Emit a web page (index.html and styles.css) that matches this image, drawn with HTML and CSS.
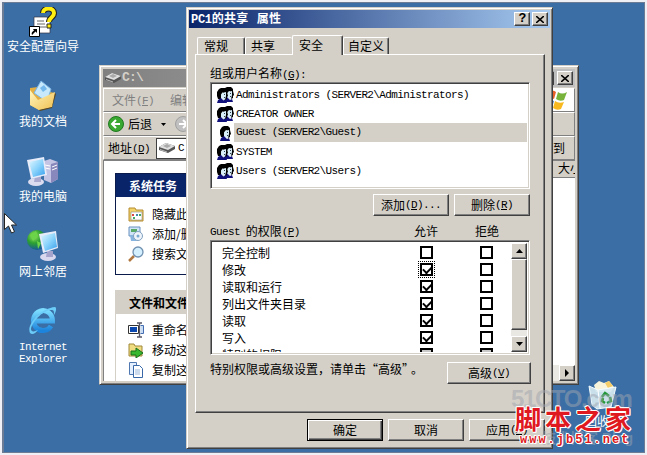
FILE: index.html
```html
<!DOCTYPE html>
<html lang="zh-CN">

<head>
    <meta charset="UTF-8">
    <meta name="viewport" content="width=device-width, initial-scale=1.0">
    <title>PC1的共享 属性</title>
    <link rel="stylesheet" href="styles.css">
</head>

<body>
    <!-- shared icons -->
    <svg width="0" height="0" class="defs">
        <defs>
            <linearGradient id="screen" x1="0" y1="0" x2="1" y2="1">
                <stop offset="0" stop-color="#e4f8ff" />
                <stop offset=".5" stop-color="#8cd4fc" />
                <stop offset="1" stop-color="#38a0ec" />
            </linearGradient>
            <linearGradient id="ie" x1="0" y1="0" x2="0" y2="1">
                <stop offset="0" stop-color="#7cdcff" />
                <stop offset="1" stop-color="#1c84dc" />
            </linearGradient>
            <linearGradient id="paper" x1="0" y1="0" x2="1" y2="1">
                <stop offset="0" stop-color="#fff6c0" />
                <stop offset="1" stop-color="#f0c050" />
            </linearGradient>
            <radialGradient id="globe" cx=".35" cy=".3" r=".8">
                <stop offset="0" stop-color="#9ce860" />
                <stop offset=".45" stop-color="#2ca030" />
                <stop offset="1" stop-color="#1048b0" />
            </radialGradient>
            <symbol id="head" viewBox="0 0 11 15">
                <path d="M2 1l2-1h4l2 2v3H8L6 4 4 7v4H1L0 8V4z" fill="#000" />
                <path d="M5 5l4-1 1 4-1 3-2 1-3-2V7z" fill="#d8eef8" />
                <path d="M9 4h1l1 4-1 1v2l-2 1 1-4z" fill="#000" />
                <path d="M1 12l3-2 3 3 2-1 1 3H0z" fill="#10107c" />
                <path d="M7 6h1v1H7zM7 9h1v1H7z" fill="#304050" />
            </symbol>
            <symbol id="user" viewBox="0 0 17 16">
                <use href="#head" x="3" y="1" width="11" height="15" />
            </symbol>
            <symbol id="group" viewBox="0 0 17 16">
                <use href="#head" x="6" y="0" width="11" height="15" />
                <use href="#head" x="0" y="1" width="11" height="15" />
            </symbol>
            <symbol id="drive" viewBox="0 0 16 12">
                <path d="M0 5l7-4 9 3v3l-7 4-9-3z" fill="#555" />
                <path d="M0 5l7-4 9 3-7 4z" fill="#e0e0e0" />
                <path d="M4 4l4-2 4 2-4 2z" fill="#aaa" />
                <path d="M1 7l7 2.500v1L1 8z" fill="#bbb" />
            </symbol>
        </defs>
    </svg>

    <div class="desktop">
        <div class="shortcut s1">
            <svg width="28" height="30" viewBox="0 0 28 30">
                <path d="M5 10h13l3 4v12H5z" fill="#fff" stroke="#334" stroke-width=".7" />
                <path d="M8 14h7M8 17h8M8 20h9" stroke="#666" />
                <path d="M14 6c0-6 11-6 11 0 0 5-5 4-5 9" fill="none" stroke="#222" stroke-width="6" />
                <path d="M14 6c0-6 11-6 11 0 0 5-5 4-5 9" fill="none" stroke="#ffee10" stroke-width="4" />
                <path d="M18 17h4v4h-4z" fill="#ffee10" stroke="#222" />
                <path d="M.5 19.500h10v10H.5z" fill="#fff" stroke="#000" />
                <path d="M4 22h4v4l-1.500-1.500L3 28c-1-2 0-3 2-4.500z" fill="#000" />
            </svg>
            <span>安全配置向导</span>
        </div>
        <div class="shortcut s2">
            <svg width="30" height="32" viewBox="0 0 30 32">
                <path d="M2 8l8-1 2 3 15 3-3 14-13 3-9-5z" fill="#e4ae40" />
                <path d="M13 1l10 8-4 13-13-9z" fill="#c8e8fc" stroke="#78b4e4" />
                <path d="M12 8l4-3 3 4-4 3z" fill="#74b8ec" />
                <path d="M2 10l8 10 17-8-3 15-13 3-9-5z" fill="url(#paper)" />
                <path d="M27 13l1 1-4 14-12 3-1-1 13-3z" fill="#5c4820" />
            </svg>
            <span>我的文档</span>
        </div>
        <div class="shortcut s3">
            <svg width="32" height="32" viewBox="0 0 32 32">
                <path d="M17 5l6-2 8 3v17l-7 4-7-3z" fill="#c4c4e4" />
                <path d="M24 8l7-2v17l-7 4z" fill="#8888bc" />
                <path d="M18 9l5 1M18 12l5 1M25 11l5-2M25 14l5-2" stroke="#fff" />
                <ellipse cx="9" cy="26" rx="8" ry="4" fill="#dcdcf0" />
                <path d="M8 20h6v6H7z" fill="#aaaad0" />
                <path d="M0 4l17-3 3 18-16 4z" fill="#e8ecfa" />
                <path d="M2 6l14-3 2 15-12 3z" fill="url(#screen)" />
            </svg>
            <span>我的电脑</span>
        </div>
        <div class="shortcut s4">
            <svg width="32" height="34" viewBox="0 0 32 34">
                <circle cx="10" cy="11" r="10" fill="url(#globe)" />
                <path d="M3 6l6-4 2 5-5 5zM10 12l4 2-3 6z" fill="#6cd448" />
                <ellipse cx="21" cy="28" rx="8" ry="4" fill="#d8d8ee" />
                <path d="M20 22h6v6h-7z" fill="#a4a4cc" />
                <path d="M12 5l17-3 2 17-15 5z" fill="#e8ecfa" />
                <path d="M14 7l14-3 2 14-12 4z" fill="url(#screen)" />
            </svg>
            <span>网上邻居</span>
        </div>
        <div class="shortcut s5">
            <svg width="32" height="32" viewBox="0 0 32 32">
                <path d="M24 21a9.500 10 0 1 1 1.500-5H9" fill="none" stroke="url(#ie)" stroke-width="5" />
                <path d="M3 28C-1 20 14 3 28 2c2 1 1 5-1 8 0-4 0-5-3-5C15 6 5 17 4 24c0 3 3 3 7 1-3 4-6 5-8 3z" fill="#6cccf8" />
            </svg>
            <span class="en">Internet<br>Explorer</span>
        </div>
        <div class="shortcut s6">
            <svg width="30" height="30" viewBox="0 0 30 30">
                <path d="M6 5l5-4 5 2 5-2 5 6-3 5H8z" fill="#f8f4dc" />
                <path d="M17 3l4-2 4 5-5 2z" fill="#f4cc68" />
                <path d="M1 6l9 4 18-3-5 20-14 2-5-4z" fill="#d4e8f0" fill-opacity=".93" stroke="#f4fcff" />
                <path d="M10 10l2 18" stroke="#fff" />
                <path d="M14 17l3-4 4 3M22 17l1 4-4 2M17 23l-3-2 1-3" fill="none" stroke="#209838" stroke-width="2.500" />
            </svg>
            <span>回收站</span>
        </div>

        <!-- explorer window behind -->
        <div class="explorer">
            <div class="bar gray-title">
                <svg width="16" height="12"><use href="#drive" /></svg>
                <b class="en">C:\</b>
                <i class="btn sys"></i>
                <i class="btn sys"><svg width="8" height="7" viewBox="0 0 8 7"><path d="M0 0l8 7M8 0L0 7" stroke="#000" stroke-width="1.600" /></svg></i>
            </div>
            <div class="strip menu">
                <span>文件<span class="en">(<u>F</u>)</span></span>
                <span>编辑<span class="en">(<u>E</u>)</span></span>
                <div class="flag">
                    <svg width="24" height="22" viewBox="0 0 24 22">
                        <path d="M3 3q5-3 8 0l-2 7q-4-2-8 0z" fill="#e86028" />
                        <path d="M13 3q4 3 9 0l-3 8q-4 2-8-1z" fill="#78b43c" />
                        <path d="M1 12q4-2 8 0l-2 7q-4-2-8 0z" fill="#4c88d8" />
                        <path d="M10 12q4 3 9 1l-3 7q-4 2-8-1z" fill="#f8b820" />
                    </svg>
                </div>
            </div>
            <div class="strip tools">
                <svg width="16" height="16" viewBox="0 0 16 16"><circle cx="8" cy="8" r="7.500" fill="#38a830" stroke="#207820" /><path d="M12 8H5M8 4L4 8l4 4" fill="none" stroke="#fff" stroke-width="2" /></svg>
                <span>后退</span>
                <svg class="drop" width="5" height="3"><path d="M0 0h5L2.500 3z" /></svg>
                <svg width="16" height="16" viewBox="0 0 16 16"><circle cx="8" cy="8" r="7.500" fill="#c0c0c0" stroke="#a0a0a0" /><path d="M4 8h7M8 4l4 4-4 4" fill="none" stroke="#fff" stroke-width="2" /></svg>
            </div>
            <div class="strip address">
                <span>地址<span class="en">(<u>D</u>)</span></span>
                <div class="path">
                    <svg width="16" height="12"><use href="#drive" /></svg>
                    <span class="en">C:\</span>
                </div>
                <span>转到</span>
            </div>
            <div class="view">
                <div class="tasks">
                    <div class="box blue">
                        <h3>系统任务</h3>
                        <p>
                            <svg width="16" height="16" viewBox="0 0 16 16"><path d="M1 2h6l1 2h7v11H1z" fill="#f4d468" stroke="#b48c30" /><path d="M3 6h11v8H3z" fill="#fff" stroke="#888" stroke-width=".6" /><path d="M4 8h2v2H4z" fill="#d44" /><path d="M8 8h2v2H8z" fill="#48a" /><path d="M11 8h2v2h-2zM5 11h2v2H5z" fill="#4a6" /></svg>
                            隐藏此驱动器
                        </p>
                        <p>
                            <svg width="16" height="16" viewBox="0 0 16 16"><path d="M1 1h11v9H1z" fill="#d0e4f8" stroke="#6890c0" /><path d="M3 3h6v3H3z" fill="#58a868" /><path d="M2 9h8v6H3z" fill="#88b4e0" /><circle cx="10" cy="10" r="4.500" fill="#eef4fa" stroke="#80a0c0" /><circle cx="10" cy="10" r="1.500" fill="#78a8d0" /></svg>
                            添加/删除程序
                        </p>
                        <p>
                            <svg width="16" height="16" viewBox="0 0 16 16"><path d="M1 15l5-5" stroke="#b07840" stroke-width="2.500" /><circle cx="10" cy="6" r="5" fill="#d4f0ff" stroke="#7090b0" stroke-width="1.300" /></svg>
                            搜索文件
                        </p>
                    </div>
                    <div class="box">
                        <h3>文件和文件夹任务</h3>
                        <p>
                            <svg width="16" height="16" viewBox="0 0 16 16"><path d="M.5 3.500h10v8H.5z" fill="#fff" stroke="#333" /><path d="M2 5h7v5H2z" fill="#0a48b0" /><path d="M9 1h5M9 15h5M11.500 1v14" stroke="#556" stroke-width="1.300" /><path d="M12.500 3.500h3v8h-3" fill="#c8dcf4" stroke="#446cb0" /></svg>
                            重命名这个文件夹
                        </p>
                        <p>
                            <svg width="16" height="16" viewBox="0 0 16 16"><path d="M1 2h5l1 2h7v10H1z" fill="#f0dc80" stroke="#a08838" /><path d="M3 9h5V6l7 5-7 5v-3H3z" fill="#38b830" stroke="#18701c" /></svg>
                            移动这个文件夹
                        </p>
                        <p>
                            <svg width="16" height="16" viewBox="0 0 16 16"><path d="M1.500.5h7v12h-7z" fill="#e4f0ff" stroke="#5078b0" /><path d="M5.500 3.500h6l3 3v9h-9z" fill="#fff" stroke="#3868a8" /><path d="M7 8h5M7 10h5M7 12h5" stroke="#98b8dc" /></svg>
                            复制这个文件夹
                        </p>
                    </div>
                </div>
                <div class="files">
                    <div class="col-head">大小</div>
                    <div class="hscroll"><i class="btn"><svg width="4" height="8"><path d="M0 0l4 4-4 4z" /></svg></i></div>
                </div>
            </div>
        </div>

        <!-- properties dialog -->
        <div class="dialog">
            <div class="bar title">
                <b><span class="en">PC1</span>的共享<span class="gap"></span>属性</b>
                <i class="btn sys en">?</i>
                <i class="btn sys"><svg width="8" height="7" viewBox="0 0 8 7"><path d="M0 0l8 7M8 0L0 7" stroke="#000" stroke-width="1.600" /></svg></i>
            </div>
            <div class="tabs">
                <div class="tab t1">常规</div>
                <div class="tab t2">共享</div>
                <div class="tab active">安全</div>
                <div class="tab t4">自定义</div>
            </div>
            <div class="panel">
                <div class="label">组或用户名称<span class="en">(<u>G</u>):</span></div>
                <div class="sunken users">
                    <div class="user"><svg width="17" height="16"><use href="#group" /></svg><span class="en">Administrators (SERVER2\Administrators)</span></div>
                    <div class="user"><svg width="17" height="16"><use href="#group" /></svg><span class="en">CREATOR OWNER</span></div>
                    <div class="user selected"><svg width="17" height="16"><use href="#user" /></svg><span class="en">Guest (SERVER2\Guest)</span></div>
                    <div class="user"><svg width="17" height="16"><use href="#group" /></svg><span class="en">SYSTEM</span></div>
                    <div class="user"><svg width="17" height="16"><use href="#group" /></svg><span class="en">Users (SERVER2\Users)</span></div>
                </div>
                <div class="row user-btns">
                    <div class="btn">添加<span class="en">(<u>D</u>)...</span></div>
                    <div class="btn">删除<span class="en">(<u>R</u>)</span></div>
                </div>
                <div class="row perm-head">
                    <span><span class="en">Guest </span>的权限<span class="en">(<u>P</u>)</span></span>
                    <span>允许</span>
                    <span>拒绝</span>
                </div>
                <div class="sunken perms">
                    <div class="perm-list">
                        <div class="perm"><span>完全控制</span><i class="check"></i><i class="check"></i></div>
                        <div class="perm"><span>修改</span><i class="check on focus"></i><i class="check"></i></div>
                        <div class="perm"><span>读取和运行</span><i class="check on"></i><i class="check"></i></div>
                        <div class="perm"><span>列出文件夹目录</span><i class="check on"></i><i class="check"></i></div>
                        <div class="perm"><span>读取</span><i class="check on"></i><i class="check"></i></div>
                        <div class="perm"><span>写入</span><i class="check on"></i><i class="check"></i></div>
                        <div class="perm"><span>特别的权限</span><i class="check off"></i><i class="check off"></i></div>
                    </div>
                    <div class="vscroll">
                        <i class="btn"><svg width="7" height="4"><path d="M0 4h7L3.500 0z" /></svg></i>
                        <i class="btn thumb"></i>
                        <i class="btn"><svg width="7" height="4"><path d="M0 0h7L3.500 4z" /></svg></i>
                    </div>
                </div>
                <div class="row advanced">
                    <span>特别权限或高级设置，请单击<q>高级</q>。</span>
                    <div class="btn">高级<span class="en">(<u>V</u>)</span></div>
                </div>
            </div>
            <div class="row actions">
                <div class="btn default">确定</div>
                <div class="btn">取消</div>
                <div class="btn">应用<span class="en">(<u>A</u>)</span></div>
            </div>
        </div>

        <svg class="cursor" width="13" height="21" viewBox="0 0 13 21"><path d="M.5.500v16l4-3.500 3 7 3-1.300-3-6.700h5z" fill="#fff" stroke="#222" /></svg>

        <div class="stamp">
            <div class="cto">51CTO.com</div>
            <div class="blog">技术博客 Blog</div>
        </div>
        <div class="mark">
            <div class="name">脚本之家</div>
            <div class="url">www.jb51.net</div>
        </div>
    </div>
</body>

</html>
```

FILE: styles.css
```css
* {
    box-sizing: border-box;
}

body {
    margin: 0;
    width: 647px;
    height: 455px;
    overflow: hidden;
    background: #eff0f5;
    font: 12px/14px "Noto Sans CJK SC", sans-serif;
    color: #000;
    white-space: nowrap;
}

.defs {
    position: absolute;
}

svg {
    flex: none;
    display: block;
}

/* half width letters, 6px each */
.en {
    font-family: "Liberation Mono", monospace;
    font-size: 11px;
    letter-spacing: -0.63px;
}

span > .en {
    line-height: 1;
    vertical-align: 1px;
}

.desktop {
    position: relative;
    width: 643px;
    height: 451px;
    margin: 2px 0 0 2px;
    border: 1px solid #6c7c94;
    border-left-width: 2px;
    background: #3a6ea5;
    overflow: hidden;
}

.shortcut {
    position: absolute;
    width: 80px;
    display: flex;
    flex-direction: column;
    align-items: center;
    gap: 3px;
    text-align: center;
    line-height: 12px;
    color: #fff;
}

.s1 { left: -1px; top: 4px; }
.s2 { left: -1px; top: 77px; }
.s3 { left: -1px; top: 153px; gap: 2px; }
.s4 { left: -1px; top: 226px; gap: 2px; }
.s5 { left: -1px; top: 302px; gap: 4px; }
.s6 { left: 559px; top: 377px; gap: 5px; }

.btn {
    display: flex;
    align-items: center;
    justify-content: center;
    flex: none;
    font-style: normal;
    background: #d4d0c8;
    border: 1px solid;
    border-color: #fff #404040 #404040 #fff;
    box-shadow: inset -1px -1px #808080;
}

.bar {
    display: flex;
    align-items: center;
    height: 18px;
    padding-right: 2px;
    color: #fff;
    flex: none;
}

.bar b {
    margin-right: auto;
}

.sys {
    width: 16px;
    height: 14px;
    margin-left: 2px;
    color: #000;
}

.sys.en {
    font-weight: bold;
    font-size: 13px;
}

/* explorer */
.explorer {
    position: absolute;
    left: 95px;
    top: 62px;
    width: 480px;
    height: 320px;
    padding: 3px;
    display: flex;
    flex-direction: column;
    background: #d4d0c8;
    border: 1px solid;
    border-color: #d4d0c8 #404040 #404040 #d4d0c8;
    box-shadow: inset 1px 1px #fff, inset -1px -1px #808080;
}

.gray-title {
    background: linear-gradient(90deg, #808080, #c0c0c0);
    padding-left: 2px;
    gap: 1px;
    color: #d4d0c8;
    margin-bottom: 1px;
}

.gray-title b {
    font-size: 13px;
    letter-spacing: -0.8px;
}

.strip {
    display: flex;
    align-items: center;
    flex: none;
    height: 24px;
    border: 1px solid;
    border-color: #fff #808080 #808080 #fff;
}

.menu {
    padding-left: 8px;
    gap: 16px;
    color: #808080;
    overflow: hidden;
}

.flag {
    width: 37px;
    height: 22px;
    margin-left: auto;
    padding-left: 8px;
    background: #fff;
}

.tools {
    padding-left: 4px;
}

.tools span {
    margin: 0 9px 0 4px;
}

.drop {
    margin-right: 9px;
}

.address {
    padding: 0 9px 0 4px;
    gap: 6px;
}

.path {
    flex: 1;
    height: 21px;
    display: flex;
    align-items: center;
    gap: 3px;
    padding-left: 2px;
    background: #fff;
    border: 1px solid #404040;
}

.view {
    flex: 1;
    min-height: 0;
    display: flex;
    background: #fff;
    border-top: 1px solid #808080;
    border-left: 1px solid #808080;
}

.tasks {
    width: 200px;
    padding: 12px 0 0 11px;
    overflow: hidden;
    flex: none;
}

.box {
    width: 185px;
    height: 102px;
    margin-bottom: 15px;
    border: 1px solid #d4d0c8;
}

.box.blue {
    border-color: #0a1a4a;
}

.box h3 {
    margin: 0 0 6px;
    padding-left: 13px;
    font-size: 12px;
    line-height: 23px;
    background: #d4d0c8;
}

.box.blue h3 {
    margin-bottom: 7px;
    background: #0a246a;
    color: #fff;
}

.box p {
    display: flex;
    align-items: center;
    gap: 8px;
    height: 20px;
    margin: 0;
    padding-left: 12px;
}

.files {
    flex: 1;
    display: flex;
    flex-direction: column;
    justify-content: space-between;
    overflow: hidden;
}

.col-head {
    height: 17px;
    margin-right: -7px;
    text-align: right;
    background: #d4d0c8;
    border-bottom: 1px solid #808080;
}

.hscroll {
    display: flex;
    justify-content: flex-end;
    height: 16px;
    background: #eae8e3;
}

.hscroll .btn {
    width: 16px;
}

/* dialog */
.dialog {
    position: absolute;
    left: 182px;
    top: 4px;
    width: 367px;
    height: 442px;
    padding: 2px;
    display: flex;
    flex-direction: column;
    background: #d4d0c8;
    border: 1px solid;
    border-color: #d4d0c8 #404040 #404040 #d4d0c8;
    box-shadow: inset 1px 1px #fff, inset -1px -1px #808080;
}

.title {
    background: linear-gradient(90deg, #0a246a, #a6caf0);
    padding-left: 2px;
}

.title b {
    letter-spacing: 0.3px;
}

.title b .en {
    font-size: 12px;
    letter-spacing: -0.3px;
}

.gap {
    display: inline-block;
    width: 8px;
}

.tabs {
    display: flex;
    align-items: flex-end;
    height: 26px;
    padding-left: 8px;
    flex: none;
}

.tab {
    height: 17px;
    padding: 1px 0 0 6px;
    line-height: 14px;
    border: 1px solid;
    border-color: #fff #404040 transparent #fff;
    border-bottom: 0;
    border-radius: 2px 2px 0 0;
    box-shadow: inset -1px 0 #808080;
}

.t1 { width: 48px; }
.t2 { width: 47px; padding-left: 5px; box-shadow: none; border-right: 0; }
.t4 { width: 46px; padding-left: 4px; }

.tab.active {
    position: relative;
    width: 51px;
    height: 20px;
    margin-bottom: -1px;
    padding-top: 2px;
    background: #d4d0c8;
}

.panel {
    margin: 0 5px 0 6px;
    height: 359px;
    flex: none;
    padding: 11px 14px 0;
    border: 1px solid;
    border-color: #fff #404040 #404040 #fff;
    box-shadow: inset -1px -1px #808080;
}

.sunken {
    background: #fff;
    border: 1px solid;
    border-color: #808080 #fff #fff #808080;
    box-shadow: inset 1px 1px #404040, inset -1px -1px #d4d0c8;
    padding: 2px;
}

.label {
    height: 16px;
}

.users {
    height: 107px;
}

.user {
    display: flex;
    align-items: center;
    height: 19px;
    padding-left: 4px;
}

.user span {
    flex: 1;
    padding-left: 2px;
    line-height: 18px;
}

.user.selected span {
    background: #d4d0c8;
    line-height: 19px;
}

.row {
    display: flex;
    align-items: center;
}

.user-btns {
    justify-content: flex-end;
    gap: 5px;
    margin-top: 5px;
}

.user-btns .btn,
.actions .btn {
    width: 76px;
    height: 22px;
}

.perm-head {
    height: 24px;
    padding-top: 5px;
}

.perm-head > :nth-child(1) { width: 204px; }
.perm-head > :nth-child(2) { width: 61px; }

.perms {
    display: flex;
    height: 115px;
}

.perm-list {
    flex: 1;
    min-width: 0;
    padding: 1px 0 0 9px;
    overflow: hidden;
}

.perm {
    display: flex;
    align-items: center;
    height: 17px;
}

.perm span {
    width: 198px;
    flex: none;
}

.check {
    position: relative;
    width: 13px;
    height: 13px;
    margin-right: 47px;
    border: 2px solid #000;
    background: #fff;
    flex: none;
}

.check.off {
    background: #c8c8c8;
}

.check.on::after {
    content: "";
    position: absolute;
    left: 1px;
    top: 1px;
    width: 7px;
    height: 4px;
    border: solid #000;
    border-width: 0 0 2px 2px;
    transform: rotate(-45deg);
}

.check.focus {
    outline: 1px dotted #000;
    outline-offset: 1px;
}

.vscroll {
    width: 16px;
    flex: none;
    display: flex;
    flex-direction: column;
    background: #eae8e3;
}

.vscroll .btn {
    height: 16px;
}

.vscroll .thumb {
    height: 71px;
    margin-bottom: auto;
}

.advanced {
    justify-content: space-between;
    align-items: flex-start;
    padding-top: 7px;
}

.advanced .btn {
    width: 84px;
    height: 22px;
    margin-right: -1px;
}

.advanced q {
    quotes: "“" "”";
    padding-right: 3px;
}

.actions {
    justify-content: flex-end;
    gap: 5px;
    margin-top: 6px;
    padding-right: 5px;
}

.actions .default {
    border-color: #000;
    box-shadow: inset 1px 1px #fff, inset -1px -1px #404040, inset -2px -2px #808080;
}

.cursor {
    position: absolute;
    left: 0;
    top: 210px;
}

/* watermarks over the desktop */
.stamp {
    position: absolute;
    left: 507px;
    top: 384px;
    width: 122px;
    font-family: "Liberation Sans", sans-serif;
    font-weight: bold;
    color: rgba(160, 165, 175, .5);
}

.cto {
    font-size: 24px;
    line-height: 23px;
    letter-spacing: -1.4px;
}

.blog {
    margin-top: 20px;
    font: bold 14px/16px "Liberation Sans", "Noto Sans CJK SC", sans-serif;
    text-align: right;
}

.mark {
    position: absolute;
    left: 511px;
    top: 399px;
    width: 120px;
    color: #e01820;
    text-shadow: 1px 0 #fff, -1px 0 #fff, 0 1px #fff, 0 -1px #fff, 1px 1px #fff, -1px -1px #fff;
}

.name {
    font: bold 26px/31px "Noto Sans CJK SC", sans-serif;
    letter-spacing: 4px;
}

.url {
    padding-left: 5px;
    font: bold 12px/14px "Liberation Mono", monospace;
    letter-spacing: 2px;
}
```
